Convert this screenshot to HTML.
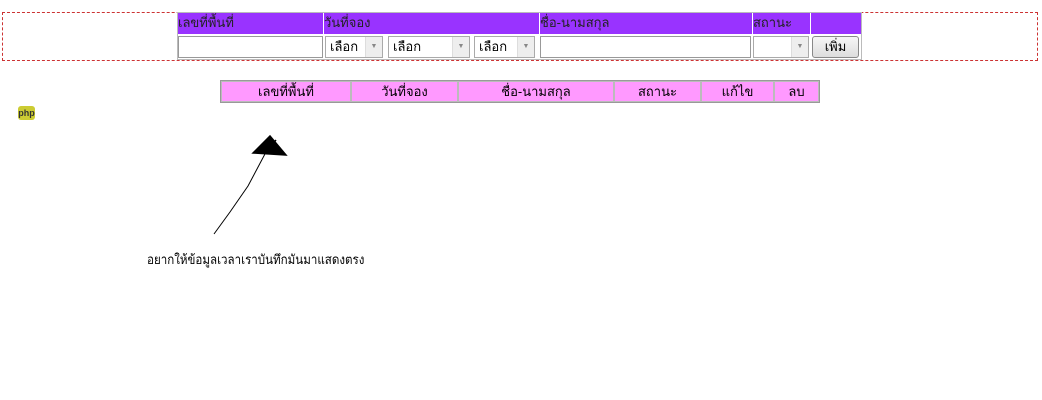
<!DOCTYPE html><html><head><meta charset="utf-8"><style>
body{margin:0;width:1042px;height:400px;background:#fff;position:relative;overflow:hidden;font-family:Tahoma,"Liberation Sans","Noto Sans CJK SC",sans-serif;font-size:13px;color:#000}
.a{position:absolute;box-sizing:border-box}
.h{background:#9933ff;color:#222;line-height:20px;height:21px;top:13px}
.p{background:#ff99ff;height:21px;top:81px;line-height:20px;text-align:center;border:1px solid #bbb}
.in{border:1px solid #999;background:#fff;height:22px;top:36px}
.sel{border:1px solid #aaa;background:#fff;height:22px;top:36px;line-height:20px;padding-left:4px}
.sel i{position:absolute;right:0;top:0;width:16px;height:20px;background:#eee;border-left:1px solid #ddd;font-style:normal;font-size:7px;color:#888;text-align:center;line-height:20px}
</style></head><body>
<div class="a" style="left:2px;top:12px;width:1036px;height:49px;border:1px dashed #c33"></div>
<div class="a" style="left:177px;top:12px;width:685px;height:48px;border:1px solid #bbb;background:#fff"></div>
<div class="a h" style="left:178px;width:145px">เลขที่พื้นที่</div>
<div class="a h" style="left:324px;width:215px">วันที่จอง</div>
<div class="a h" style="left:540px;width:212px">ชื่อ-นามสกุล</div>
<div class="a h" style="left:753px;width:57px">สถานะ</div>
<div class="a h" style="left:811px;width:50px"></div>
<div class="a in" style="left:178px;width:145px"></div>
<div class="a sel" style="left:325px;width:58px">เลือก<i>▼</i></div>
<div class="a sel" style="left:388px;width:82px">เลือก<i>▼</i></div>
<div class="a sel" style="left:474px;width:61px">เลือก<i>▼</i></div>
<div class="a in" style="left:540px;width:211px"></div>
<div class="a sel" style="left:753px;width:56px"><i>▼</i></div>
<div class="a" style="left:812px;top:36px;width:47px;height:22px;border:1px solid #888;border-radius:3px;background:linear-gradient(#f6f6f6,#ddd);text-align:center;line-height:20px">เพิ่ม</div>
<div class="a" style="left:220px;top:80px;width:600px;height:23px;border:1px solid #999"></div>
<div class="a p" style="left:221px;width:130px">เลขที่พื้นที่</div>
<div class="a p" style="left:351px;width:107px">วันที่จอง</div>
<div class="a p" style="left:458px;width:156px">ชื่อ-นามสกุล</div>
<div class="a p" style="left:614px;width:87px">สถานะ</div>
<div class="a p" style="left:701px;width:73px">แก้ไข</div>
<div class="a p" style="left:774px;width:45px">ลบ</div>
<div class="a" style="left:18px;top:106px;width:17px;height:14px;background:#cc3;border-radius:3px;font-size:9px;font-weight:bold;line-height:14px;text-align:center;color:#333">php</div>
<svg class="a" style="left:200px;top:130px" width="100" height="110"><path d="M14 104 L30 82 L48 56 L66 22" stroke="#000" fill="none" stroke-width="1"/><path d="M53 23 L70 6 L86 25 Z M60 20 L72 8 M66 22 L76 10" stroke="#000" fill="#000" stroke-width="1.5"/></svg>
<div class="a" style="left:147px;top:249px;font-size:13px;transform:scaleX(0.89);transform-origin:0 0;white-space:nowrap">อยากให้ข้อมูลเวลาเราบันทึกมันมาแสดงตรง</div>
</body></html>
